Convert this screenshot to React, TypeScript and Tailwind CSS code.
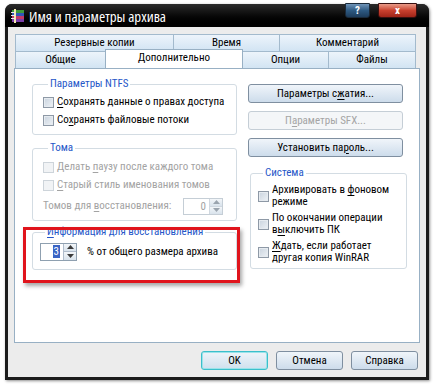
import React from "react";

const Checkbox = ({ disabled = false }: { disabled?: boolean }) => (
  <span
    className={
      "inline-block w-[11px] h-[11px] shrink-0 border " +
      (disabled
        ? "border-[#cdd4da] bg-[#f1f3f5]"
        : "border-[#8e99a6] bg-gradient-to-br from-[#c9d3de] to-[#eef2f6] shadow-[inset_0_0_0_1px_#e6ebf0]")
    }
  />
);

const Row = ({ label, disabled = false }: { label: React.ReactNode; disabled?: boolean }) => (
  <div className="flex items-center h-[18px] gap-[3px]">
    <Checkbox disabled={disabled} />
    <span className={"whitespace-nowrap " + (disabled ? "text-[#a3a3a3]" : "text-[#000]")}>{label}</span>
  </div>
);

const Legend = ({ children }: { children: React.ReactNode }) => (
  <legend className="ml-[5px] px-[2px] leading-[14px] text-[#2657c8] whitespace-nowrap">{children}</legend>
);

const Button = ({ children, disabled = false, focus = false, cls = "" }: { children: React.ReactNode; disabled?: boolean; focus?: boolean; cls?: string }) => (
  <div
    className={
      "flex items-center justify-center h-[19px] rounded-[3px] border whitespace-nowrap " +
      (disabled
        ? "border-[#c5ced6] bg-[#f4f6f8] text-[#a5a5a5] "
        : focus
        ? "border-[#3bbfcb] bg-gradient-to-b from-[#eef4f9] to-[#cfe0ee] text-black shadow-[inset_0_0_0_1px_#9be3ea] "
        : "border-[#7f8fa0] bg-gradient-to-b from-[#f0f5fa] to-[#cddceb] text-black ") +
      cls
    }
  >
    {children}
  </div>
);

const U = ({ children }: { children: React.ReactNode }) => <span className="underline underline-offset-[2px]">{children}</span>;

const Tab = ({ children, w, selected = false }: { children: React.ReactNode; w: string; selected?: boolean }) => (
  <div
    className={
      w +
      " flex items-center justify-center border-t border-l border-r -ml-[1px] first:ml-0 whitespace-nowrap " +
      (selected
        ? "relative z-10 -mt-[2px] h-[19px] -mb-[1px] bg-white border-[#98b0c4] pb-[2px]"
        : "h-[17px] bg-gradient-to-b from-[#edf4fb] to-[#d2e4f3] border-[#a3bacd]")
    }
  >
    {children}
  </div>
);

const SpinArrows = ({ dim = false }: { dim?: boolean }) => (
  <div className={"flex flex-col w-[13px] h-full border-l " + (dim ? "border-[#d0d8e0]" : "border-[#b0bccb]")}>
    <div className={"flex-1 flex items-center justify-center bg-gradient-to-b from-[#f3f6f9] to-[#d9e3ec] border-b " + (dim ? "border-[#d0d8e0]" : "border-[#b0bccb]")}>
      <svg width="7" height="4" viewBox="0 0 7 4"><path d="M0 4 L3.5 0 L7 4 Z" fill={dim ? "#9aa4ae" : "#3a3a3a"} /></svg>
    </div>
    <div className="flex-1 flex items-center justify-center bg-gradient-to-b from-[#f3f6f9] to-[#d9e3ec]">
      <svg width="7" height="4" viewBox="0 0 7 4"><path d="M0 0 L3.5 4 L7 0 Z" fill={dim ? "#9aa4ae" : "#3a3a3a"} /></svg>
    </div>
  </div>
);

export default function App() {
  return (
    <div className="relative w-[434px] h-[386px] bg-white overflow-hidden font-['Roboto_Condensed','Roboto',sans-serif] text-[11px] leading-[14px] text-black">
      {/* window */}
      <div className="relative ml-[5px] mt-[4px] w-[424px] h-[376px] flex flex-col rounded-t-[7px] bg-[#1c1c1c] shadow-[1px_1px_3px_rgba(0,0,0,0.45)]">
        {/* title bar */}
        <div className="h-[24px] flex items-center pl-[6px] gap-[4px] rounded-t-[7px] bg-gradient-to-b from-[#2c2c2c] via-[#0a0a0a] to-[#000]">
          <svg width="14" height="14" viewBox="0 0 14 14">
            <rect x="1" y="1" width="12" height="3" fill="#3f9a3a" />
            <rect x="1" y="4" width="12" height="3" fill="#3158b8" />
            <rect x="1" y="7" width="12" height="3" fill="#c23a6a" />
            <rect x="1" y="10" width="12" height="3" fill="#7a3ea8" />
            <rect x="3" y="0" width="2" height="14" fill="#f2e7b0" />
            <rect x="0" y="3" width="4" height="1" fill="#eee" />
            <rect x="0" y="6" width="4" height="1" fill="#eee" />
            <rect x="0" y="9" width="4" height="1" fill="#eee" />
          </svg>
          <span className="text-white text-[15px] leading-[18px] font-['Open_Sans',sans-serif] [font-stretch:75%] whitespace-nowrap">Имя и параметры архива</span>
        </div>
        {/* caption buttons */}
        <div className="absolute top-[-1px] left-[340px] flex gap-[8px]">
          <div className="w-[25px] h-[15px] rounded-b-[3px] border border-[#1a2a3a] bg-gradient-to-b from-[#6f94b8] via-[#2e5a82] to-[#1d3c5c] flex items-center justify-center text-white text-[11px] font-bold leading-none">?</div>
          <div className="w-[39px] h-[15px] rounded-b-[3px] border border-[#3a1010] bg-gradient-to-b from-[#e89a88] via-[#c8402e] to-[#a02418] flex items-center justify-center text-white text-[11px] font-bold leading-none">x</div>
        </div>

        {/* body */}
        <div className="flex-1 mx-[3px] mb-[3px] bg-[#ececec] flex flex-col pt-[7px] px-[6px] pb-[7px]">
          {/* tabs */}
          <div className="flex flex-col ml-[1px] mr-[3px] text-center">
            <div className="flex">
              <Tab w="w-[159px]">Резервные копии</Tab>
              <Tab w="w-[107px]">Время</Tab>
              <Tab w="w-[137px]">Комментарий</Tab>
            </div>
            <div className="flex">
              <Tab w="w-[91px]">Общие</Tab>
              <Tab w="w-[138px]" selected>Дополнительно</Tab>
              <Tab w="w-[87px]">Опции</Tab>
              <Tab w="w-[88px]">Файлы</Tab>
            </div>
          </div>
          {/* panel */}
          <div className="h-[275px] bg-white border border-[#98b0c4] flex pl-[17px] gap-[11px]">
            {/* left column */}
            <div className="w-[205px] flex flex-col">
              <fieldset className="mt-[8px] border border-[#d3dce3] rounded-[3px] pl-[10px] pb-[5px]">
                <Legend>Параметры NTFS</Legend>
                <div className="pt-[2px]">
                  <Row label={<><U>С</U>охранять данные о правах доступа</>} />
                  <Row label={<>Со<U>х</U>ранять файловые потоки</>} />
                </div>
              </fieldset>
              <fieldset className="mt-[6px] border border-[#d3dce3] rounded-[3px] pl-[10px] pb-[4px]">
                <Legend>Тома</Legend>
                <div className="pt-[3px]">
                  <Row disabled label={<>Делать <U>п</U>аузу после каждого тома</>} />
                  <Row disabled label={<><U>С</U>тарый стиль именования томов</>} />
                  <div className="flex items-center h-[20px] mt-[2px]">
                    <span className="text-[#a3a3a3] whitespace-nowrap">Томов для <U>в</U>осстановления:</span>
                    <div className="ml-auto mr-[13px] w-[40px] h-[17px] border border-[#c5ced6] flex">
                      <div className="flex-1 text-right pr-[3px] text-[#a3a3a3] leading-[15px]">0</div>
                      <SpinArrows dim />
                    </div>
                  </div>
                </div>
              </fieldset>
              <fieldset className="mt-[4px] border border-[#d3dce3] rounded-[3px] pl-[7px] pb-[8px]">
                <Legend><U>И</U>нформация для восстановления</Legend>
                <div className="flex items-center h-[19px] mt-[3px]">
                  <div className="w-[37px] h-[18px] border border-[#8fa0b0] flex">
                    <div className="flex-1 flex items-center justify-end pr-[3px]">
                      <span className="bg-[#3a64c4] text-white px-[1px] leading-[13px]">3</span>
                    </div>
                    <SpinArrows />
                  </div>
                  <span className="ml-[10px] whitespace-nowrap">% от общего размера архива</span>
                </div>
              </fieldset>
            </div>
            {/* right column */}
            <div className="w-[159px] flex flex-col">
              <div className="mt-[15px] flex flex-col gap-[8px] w-[155px]">
                <Button>Параметры с<U>ж</U>атия...</Button>
                <Button disabled>П<U>а</U>раметры SFX...</Button>
                <Button>Установить па<U>р</U>оль...</Button>
              </div>
              <fieldset className="mt-[9px] ml-[2px] w-[157px] border border-[#d3dce3] rounded-[3px] pl-[7px] pb-[4px]">
                <Legend>Система</Legend>
                <div className="flex flex-col gap-[4px] pt-[4px] leading-[12px]">
                  {[
                    [<>Архивировать в <U>ф</U>оновом</>, "режиме"],
                    ["По окончании операции", <>в<U>ы</U>ключить ПК</>],
                    [<><U>Ж</U>дать, если работает</>, "другая копия WinRAR"],
                  ].map((l, i) => (
                    <div key={i} className="flex items-center gap-[3px]">
                      <Checkbox />
                      <div className="flex flex-col whitespace-nowrap">
                        <span>{l[0]}</span>
                        <span>{l[1]}</span>
                      </div>
                    </div>
                  ))}
                </div>
              </fieldset>
            </div>
          </div>
          {/* bottom buttons */}
          <div className="mt-[8px] flex justify-end gap-[8px] pr-[2px]">
            <Button focus cls="w-[67px]">OK</Button>
            <Button cls="w-[67px]">Отмена</Button>
            <Button cls="w-[67px]">Справка</Button>
          </div>
        </div>
      </div>
      {/* red annotation box */}
      <div className="absolute left-[23px] top-[227px] w-[217px] h-[56px] border-[3px] border-[#e0141c] shadow-[2px_3px_4px_rgba(0,0,0,0.35)] pointer-events-none" />
    </div>
  );
}
